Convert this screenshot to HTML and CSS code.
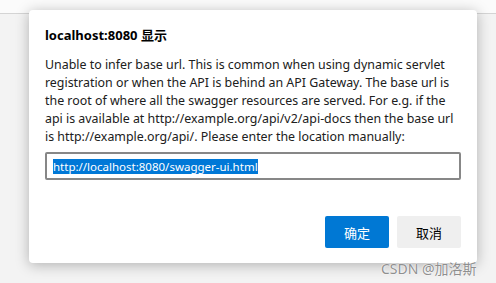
FILE: index.html
```html
<!DOCTYPE html>
<html lang="zh-CN">
<head>
<meta charset="UTF-8" />
<title>localhost:8080</title>
<link rel="stylesheet" href="styles.css">
</head>
<body>
<div class="toolbar"></div>
<div class="page"></div>
<div class="dialog">
  <h1 class="titulo">localhost:8080 显示</h1>
  <p class="mensagem">Unable to infer base url. This is common when using dynamic servlet registration or when the API is behind an API Gateway. The base url is the root of where all the swagger resources are served. For e.g. if the api is available at http://example.org/api/v2/api-docs then the base url is http://example.org/api/. Please enter the location manually:</p>
  <div class="campo"><span class="selecionado">http://localhost:8080/swagger-ui.html</span></div>
  <div class="botoes">
    <button class="ok">确定</button>
    <button class="cancelar">取消</button>
  </div>
</div>
<div class="marca">CSDN @加洛斯</div>
</body>
</html>
```

FILE: styles.css
```css
body {
  margin: 0;
  padding: 0;
  width: 496px;
  height: 283px;
  overflow: hidden;
  background-color: #f3f3f3;
  font-family: 'Noto Sans', 'Noto Sans CJK SC', sans-serif;
}
.toolbar {
  height: 13px;
  background-color: #fbfbfb;
  border-bottom: 1px solid #d4d4d4;
}
.dialog {
  position: absolute;
  left: 29px;
  top: 10px;
  width: 448px;
  height: 253px;
  box-sizing: border-box;
  padding: 16px 16px 0 16px;
  background: white;
  border-radius: 4px;
  box-shadow: 0 2px 14px rgba(0,0,0,0.28);
  color: #1a1a1a;
}
.titulo {
  margin: 0;
  font-size: 13px;
  font-weight: bold;
  line-height: 18px;
  color: #000;
}
.mensagem {
  margin: 12px 0 0;
  font-size: 12.4px;
  line-height: 18px;
  color: #202020;
}
.campo {
  margin-top: 6px;
  height: 28px;
  box-sizing: border-box;
  border: 2px solid #878787;
  border-radius: 2px;
  padding: 0 0 0 6px;
  display: flex;
  align-items: center;
  font-size: 11.5px;
}
.selecionado {
  background-color: #0078d7;
  color: white;
  line-height: 15px;
}
.botoes {
  display: flex;
  justify-content: flex-end;
  gap: 8px;
  margin-top: 36px;
}
.botoes button {
  width: 64px;
  height: 32px;
  border: none;
  border-radius: 2px;
  font-family: 'Noto Sans CJK SC', sans-serif;
  font-size: 13px;
}
.ok {
  background-color: #0078d4;
  color: white;
}
.cancelar {
  background-color: #efefef;
  color: #000;
}
.marca {
  position: absolute;
  left: 381px;
  top: 258px;
  font-family: 'Noto Sans', 'Noto Sans CJK SC', sans-serif;
  font-size: 14px;
  color: #8f8f8f;
  text-shadow: 0 0 2px white, 0 0 1px white;
}
```
